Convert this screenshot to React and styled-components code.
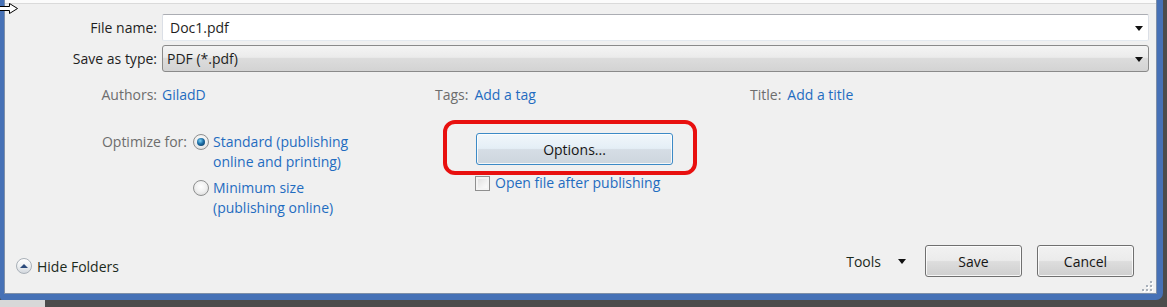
import styled, { createGlobalStyle } from 'styled-components';

// Windows 7 "Save As" dialog colours
const colors = {
  frame: '#4671b6',
  frameInner: '#7e8fa8',
  panel: '#f0f0f0',
  outside: '#4c4c4c',
  label: '#1e1e1e',
  muted: '#6d6d6d',
  link: '#1f6cc0',
  highlight: '#e8100f',
};

const GlobalStyle = createGlobalStyle`
  html, body {
    margin: 0;
    padding: 0;
    background: ${colors.outside};
  }
  body {
    font-family: 'Open Sans', 'Noto Sans', sans-serif;
    font-size: 14px;
    color: ${colors.label};
  }
`;

const Page = styled.div`
  width: 1167px;
  height: 307px;
  display: flex;
  flex-direction: column;
  overflow: hidden;
  position: relative;
`;

const Window = styled.div`
  width: 1163px;
  height: 300px;
  box-sizing: border-box;
  border-left: 4px solid ${colors.frame};
  border-right: 6px solid ${colors.frame};
  border-bottom: 6px solid ${colors.frame};
  border-bottom-right-radius: 7px;
  border-bottom-left-radius: 3px;
  background: ${colors.frame};
`;

const Panel = styled.div`
  height: 100%;
  box-sizing: border-box;
  border-left: 1px solid ${colors.frameInner};
  border-right: 1px solid ${colors.frameInner};
  border-bottom: 1px solid ${colors.frameInner};
  background: ${colors.panel};
  display: flex;
  flex-direction: column;
  position: relative;
`;

const BelowWindow = styled.div`
  flex: 1;
  display: flex;
`;

const LightPatch = styled.div`
  width: 45px;
  background: #d8d8d8;
`;

const TopStrip = styled.div`
  height: 3px;
  background: #fbfbfb;
  border-bottom: 1px solid #dadada;
`;

const Form = styled.div`
  display: flex;
  flex-direction: column;
  gap: 4px;
  margin-top: 10px;
  padding-right: 7px;
`;

const FieldRow = styled.div`
  display: flex;
  align-items: center;
  gap: 5px;
  height: 27px;
`;

const FieldLabel = styled.label`
  width: 152px;
  text-align: right;
  color: ${colors.label};
`;

const TextBox = styled.div`
  flex: 1;
  height: 27px;
  box-sizing: border-box;
  display: flex;
  align-items: center;
  justify-content: space-between;
  padding: 0 5px 0 7px;
  background: #fff;
  border: 1px solid #dbdfe6;
  border-top-color: #abadb3;
  border-bottom-color: #e3e9ef;
  border-radius: 2px;
`;

const ComboBox = styled(TextBox)`
  padding-left: 4px;
  border: 1px solid #8a8a8a;
  border-radius: 3px;
  background: linear-gradient(#f4f4f4 0%, #ebebeb 45%, #dcdcdc 50%, #d3d3d3 100%);
`;

const Arrow = styled.span`
  width: 0;
  height: 0;
  border-left: 4px solid transparent;
  border-right: 4px solid transparent;
  border-top: 5px solid #111;
  margin-top: 1px;
`;

const MetaRow = styled.div`
  display: grid;
  grid-template-columns: 152px 268px 310px 1fr;
  column-gap: 5px;
  margin-top: 13px;
  line-height: 20px;
`;

const MetaLabel = styled.span`
  color: ${colors.muted};
  text-align: ${(p) => (p.$right ? 'right' : 'left')};
  margin-right: ${(p) => (p.$right ? 0 : 6)}px;
`;

const Link = styled.span`
  color: ${colors.link};
`;

const MetaPair = styled.div`
  display: flex;
`;

const OptimizeSection = styled.div`
  display: flex;
  align-items: flex-start;
  margin-top: 27px;
  line-height: 20px;
`;

const OptimizeLabel = styled.div`
  width: 182px;
  text-align: right;
  color: ${colors.muted};
`;

const RadioGroup = styled.div`
  width: 283px;
  margin-left: 6px;
  display: flex;
  flex-direction: column;
  gap: 6px;
`;

const RadioOption = styled.div`
  display: flex;
  align-items: flex-start;
  gap: 4px;
  color: ${colors.link};
`;

const RadioDot = styled.span`
  flex: none;
  width: 16px;
  height: 16px;
  margin-top: 2px;
  box-sizing: border-box;
  border-radius: 50%;
  border: 1px solid #8e8f8f;
  background: radial-gradient(circle at 50% 40%, #ffffff 0%, #f0f0f0 50%, #d2d2d2 100%);
  display: flex;
  align-items: center;
  justify-content: center;

  &::after {
    content: '';
    display: ${(p) => (p.$checked ? 'block' : 'none')};
    width: 8px;
    height: 8px;
    border-radius: 50%;
    background: radial-gradient(circle at 40% 35%, #7fd3f4 0%, #1c6fa8 45%, #0b2d4f 100%);
  }
`;

const OptionsColumn = styled.div`
  position: relative;
  margin-top: 1px;
  display: flex;
  flex-direction: column;
  align-items: flex-start;
`;

const RedHighlight = styled.div`
  position: absolute;
  left: -33px;
  top: -13px;
  width: 254px;
  height: 55px;
  box-sizing: border-box;
  border: 4px solid ${colors.highlight};
  border-radius: 12px;
  pointer-events: none;
`;

const Button = styled.button`
  width: ${(p) => p.$width || 97}px;
  height: 32px;
  font-family: inherit;
  font-size: 14px;
  color: #151515;
  border-radius: 3px;
  border: 1px solid #707070;
  box-shadow: inset 0 0 0 1px rgba(255, 255, 255, 0.8);
  background: linear-gradient(#f2f2f2 0%, #ebebeb 48%, #dddddd 52%, #cfcfcf 100%);
  padding: 0;
`;

const HoverButton = styled(Button)`
  border-color: #3c8ac6;
  background: linear-gradient(#f1f7fb 0%, #e4eef6 48%, #d5dde5 52%, #cdd6de 100%);
`;

const CheckRow = styled.div`
  display: flex;
  align-items: center;
  gap: 5px;
  margin-top: 8px;
  margin-left: -1px;
  color: ${colors.link};
`;

const CheckBox = styled.span`
  width: 15px;
  height: 15px;
  box-sizing: border-box;
  border: 1px solid #8f8f8f;
  background: linear-gradient(135deg, #dcdcdc 0%, #f6f6f6 70%, #ffffff 100%);
  box-shadow: inset 0 0 0 2px #f4f4f4;
`;

const BottomBar = styled.div`
  margin-top: auto;
  display: flex;
  align-items: center;
  padding: 0 22px 16px 11px;
`;

const HideFolders = styled.div`
  align-self: flex-end;
  display: flex;
  align-items: center;
  gap: 5px;
  height: 20px;
  margin-bottom: 1px;
  color: #1c2a1c;
`;

const CircleIcon = styled.span`
  width: 16px;
  height: 16px;
  box-sizing: border-box;
  border-radius: 50%;
  border: 1px solid #a9b0b8;
  background: linear-gradient(#ffffff 0%, #eef0f2 50%, #d3d8de 100%);
  display: flex;
  align-items: center;
  justify-content: center;

  &::after {
    content: '';
    width: 0;
    height: 0;
    border-left: 4px solid transparent;
    border-right: 4px solid transparent;
    border-bottom: 4px solid #2c4b7c;
    margin-top: -1px;
  }
`;

const Spacer = styled.div`
  flex: 1;
`;

const Tools = styled.div`
  display: flex;
  align-items: center;
  gap: 17px;
  margin-right: 19px;
  color: #1c2a1c;
`;

const ButtonGroup = styled.div`
  display: flex;
  gap: 15px;
`;

const ResizeGrip = styled.svg`
  position: absolute;
  right: 3px;
  bottom: 1px;
`;

const Cursor = styled.svg`
  position: absolute;
  left: 0;
  top: 2px;
`;

export default function App() {
  return (
    <Page>
      <GlobalStyle />
      <Window>
        <Panel>
          <TopStrip />
          <Form>
            <FieldRow>
              <FieldLabel>File name:</FieldLabel>
              <TextBox>
                <span>Doc1.pdf</span>
                <Arrow />
              </TextBox>
            </FieldRow>
            <FieldRow>
              <FieldLabel>Save as type:</FieldLabel>
              <ComboBox>
                <span>PDF (*.pdf)</span>
                <Arrow />
              </ComboBox>
            </FieldRow>
          </Form>

          <MetaRow>
            <MetaLabel $right>Authors:</MetaLabel>
            <Link>GiladD</Link>
            <MetaPair>
              <MetaLabel>Tags:</MetaLabel>
              <Link>Add a tag</Link>
            </MetaPair>
            <MetaPair>
              <MetaLabel>Title:</MetaLabel>
              <Link>Add a title</Link>
            </MetaPair>
          </MetaRow>

          <OptimizeSection>
            <OptimizeLabel>Optimize for:</OptimizeLabel>
            <RadioGroup>
              <RadioOption>
                <RadioDot $checked />
                <span>
                  Standard (publishing
                  <br />
                  online and printing)
                </span>
              </RadioOption>
              <RadioOption>
                <RadioDot />
                <span>
                  Minimum size
                  <br />
                  (publishing online)
                </span>
              </RadioOption>
            </RadioGroup>
            <OptionsColumn>
              <RedHighlight />
              <HoverButton $width={197}>Options...</HoverButton>
              <CheckRow>
                <CheckBox />
                <span>Open file after publishing</span>
              </CheckRow>
            </OptionsColumn>
          </OptimizeSection>

          <BottomBar>
            <HideFolders>
              <CircleIcon />
              <span>Hide Folders</span>
            </HideFolders>
            <Spacer />
            <Tools>
              <span>Tools</span>
              <Arrow />
            </Tools>
            <ButtonGroup>
              <Button>Save</Button>
              <Button>Cancel</Button>
            </ButtonGroup>
          </BottomBar>

          <ResizeGrip width="11" height="11" viewBox="0 0 11 11">
            {[
              [8, 0],
              [8, 4],
              [4, 4],
              [8, 8],
              [4, 8],
              [0, 8],
            ].map(([x, y]) => (
              <g key={`${x}-${y}`}>
                <rect x={x + 1} y={y + 1} width="2" height="2" fill="#ffffff" />
                <rect x={x} y={y} width="2" height="2" fill="#a8b0ba" />
              </g>
            ))}
          </ResizeGrip>
        </Panel>
      </Window>
      <BelowWindow>
        <LightPatch />
      </BelowWindow>
      <Cursor width="20" height="13" viewBox="0 0 20 13">
        <path d="M0 4.5 H9.5 V1.5 L17.5 6.5 L9.5 11.5 V8.5 H0" fill="#fff" stroke="#000" strokeWidth="1" />
      </Cursor>
    </Page>
  );
}
